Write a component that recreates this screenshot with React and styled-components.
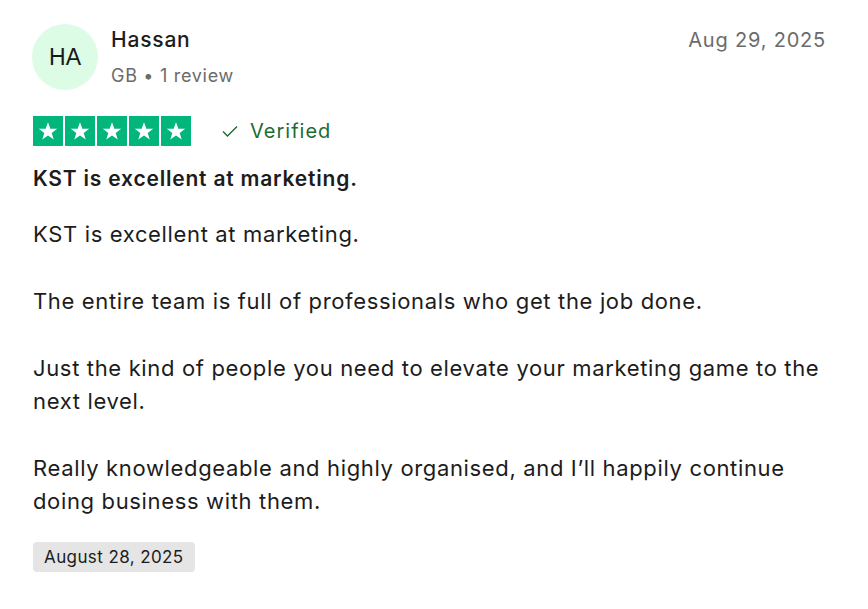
import styled, { createGlobalStyle } from 'styled-components';

const GlobalStyle = createGlobalStyle`
  body {
    margin: 0;
    background: #fff;
    font-family: Inter, "Noto Sans", sans-serif;
    color: #1c1c1c;
  }
`;

const paragraphs = [
  'KST is excellent at marketing.',
  'The entire team is full of professionals who get the job done.',
  'Just the kind of people you need to elevate your marketing game to the next level.',
  'Really knowledgeable and highly organised, and I\u2019ll happily continue doing business with them.',
];

const Star = () => (
  <svg width="22" height="22" viewBox="0 0 24 24">
    <path
      fill="#fff"
      d="M12 2.5l2.6 7.1h7.5l-6.1 4.5 2.3 7.3L12 17l-6.3 4.4 2.3-7.3-6.1-4.5h7.5z"
    />
  </svg>
);

const App = () => {
  return (
    <>
      <GlobalStyle />
      <Card>
        <Header>
          <Consumer>
            <Avatar>HA</Avatar>
            <Who>
              <Name>Hassan</Name>
              <Meta>GB • 1 review</Meta>
            </Who>
          </Consumer>
          <PostDate>Aug 29, 2025</PostDate>
        </Header>
        <RatingRow>
          <Stars>
            {[0, 1, 2, 3, 4].map((i) => (
              <StarBox key={i}>
                <Star />
              </StarBox>
            ))}
          </Stars>
          <Verified>
            <svg width="20" height="20" viewBox="0 0 20 20">
              <path d="M3 10.5l4.5 4.5L17 5.5" fill="none" stroke="#1c6b30" strokeWidth="1.4" />
            </svg>
            Verified
          </Verified>
        </RatingRow>
        <Title>KST is excellent at marketing.</Title>
        <Body>
          {paragraphs.map((p) => (
            <p key={p}>{p}</p>
          ))}
        </Body>
        <ExperienceDate>August 28, 2025</ExperienceDate>
      </Card>
    </>
  );
};

const Card = styled.article`
  padding: 24px 42px 0 33px;
`;

const Header = styled.div`
  display: flex;
  justify-content: space-between;
  align-items: flex-start;
`;

const Consumer = styled.div`
  display: flex;
  align-items: center;
  gap: 13px;
  margin-left: -1px;
`;

const Avatar = styled.div`
  width: 66px;
  height: 66px;
  border-radius: 50%;
  background: #dcfce6;
  display: flex;
  align-items: center;
  justify-content: center;
  font-family: "Liberation Sans", Arial, sans-serif;
  font-size: 23px;
  color: #1a1a1a;
`;

const Who = styled.div`
  display: flex;
  flex-direction: column;
  gap: 11px;
  margin-top: 1px;
`;

const Name = styled.div`
  font-size: 21px;
  line-height: 26px;
  font-weight: 500;
  letter-spacing: 0.8px;
  color: #1c1c1c;
`;

const Meta = styled.div`
  font-size: 18px;
  line-height: 24px;
  letter-spacing: 0.7px;
  color: #6b6b6b;
`;

const PostDate = styled.div`
  font-size: 20px;
  color: #6b6b6b;
  padding-top: 4px;
  letter-spacing: 0.8px;
`;

const RatingRow = styled.div`
  display: flex;
  align-items: center;
  gap: 29px;
  margin-top: 26px;
`;

const Stars = styled.div`
  display: flex;
  gap: 2px;
`;

const StarBox = styled.div`
  width: 30px;
  height: 30px;
  background: #00b67a;
  display: flex;
  align-items: center;
  justify-content: center;
`;

const Verified = styled.div`
  display: flex;
  align-items: center;
  gap: 10px;
  font-size: 20px;
  letter-spacing: 1px;
  color: #1c6b30;
`;

const Title = styled.h2`
  margin: 20px 0 0;
  font-size: 21px;
  font-weight: 600;
  letter-spacing: 0.8px;
  color: #1c1c1c;
`;

const Body = styled.div`
  margin-top: 27px;
  font-size: 22px;
  line-height: 33px;
  letter-spacing: 0.65px;
  color: #1c1c1c;
  p {
    margin: 0 0 34px;
  }
  p:last-child {
    margin-bottom: 0;
  }
`;

const ExperienceDate = styled.div`
  display: inline-block;
  margin-top: 24px;
  padding: 5px 11px;
  background: #e5e5e5;
  border-radius: 4px;
  font-size: 17px;
  letter-spacing: 0.4px;
  color: #1c1c1c;
`;

export default App;
